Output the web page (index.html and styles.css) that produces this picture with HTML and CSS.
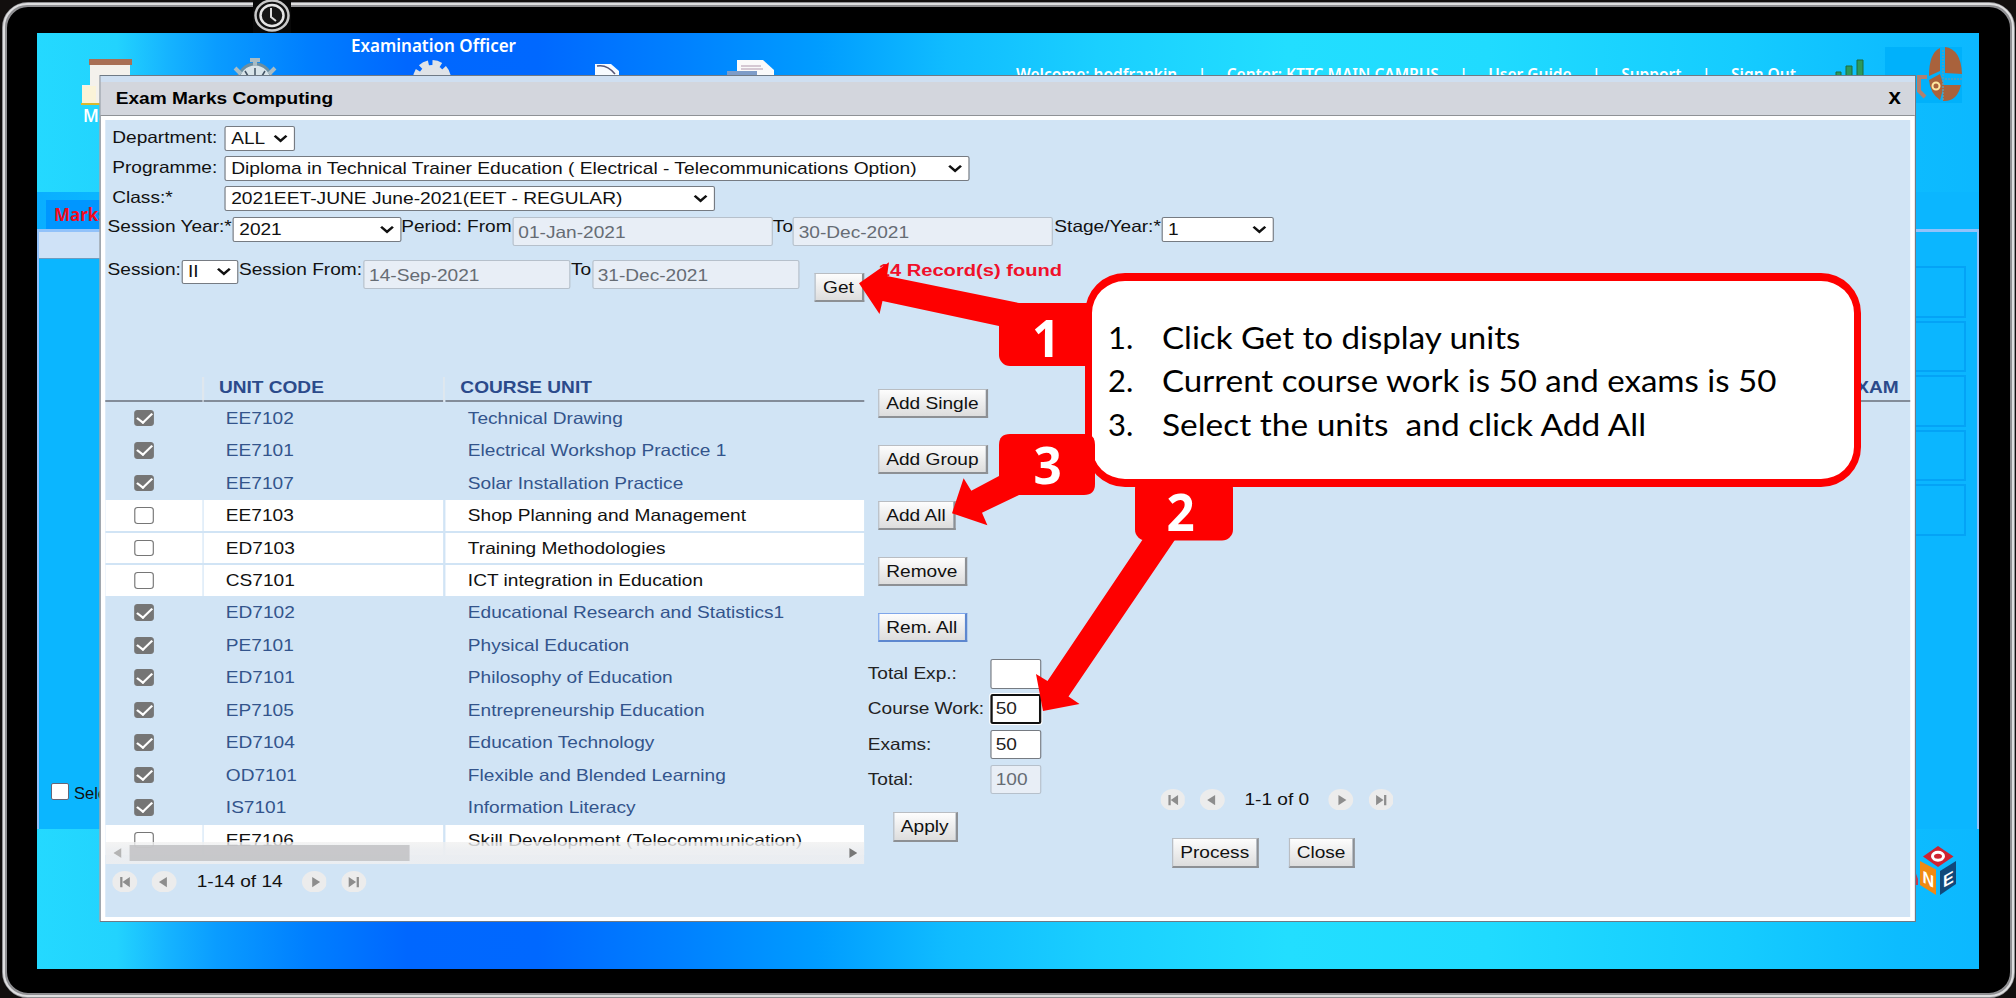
FILE: index.html
```html
<!DOCTYPE html>
<html lang="en">
<head>
<meta charset="utf-8">
<title>Exam Marks Computing</title>
<link rel="stylesheet" href="styles.css">
</head>
<body>
<div class="bezel">
  <div class="screen">
    <header class="topbar">
      <div class="role">Examination Officer</div>
      <svg class="icons" width="1942" height="90" viewBox="37 33 1942 90">
        <path d="M90 63h40v42h-48v-20h8z" fill="#f4f1ec"/><path d="M82 86h14v17h-14z" fill="#fbf3d8"/><path d="M89 59h43v6h-43z" fill="#a96f55"/><path d="M81 103h20v2h-20z" fill="#d9b92f"/>
        <circle cx="255" cy="81" r="17" fill="#d8e4ea" stroke="#6c8ea0" stroke-width="3"/><path d="M250 60h10M255 60v6M235 68l6 6M275 68l-6 6" stroke="#a9bcc4" stroke-width="4"/><path d="M255 68v7M245 71l3 5M265 71l-3 5" stroke="#456" stroke-width="1.5"/>
        <circle cx="432" cy="79" r="14" fill="#dfe3e8"/><circle cx="432" cy="79" r="15" fill="none" stroke="#dfe3e8" stroke-width="8" stroke-dasharray="8 3.780"/>
        <path d="M595 64h16l8 7v6h-24z" fill="#f7fbff"/><path d="M597 66q10-2 18 8" fill="none" stroke="#557" stroke-width="1.5"/>
        <path d="M737 60h26l11 10v6h-37z" fill="#fafafa"/><path d="M741 66h20M741 69h22" stroke="#c9b9c6" stroke-width="1.5"/><path d="M727 71h30v5h-30z" fill="#7d9cc8"/>
        <path d="M1836 72h5v5h-5zM1846 66h6v10h-6zM1857 60h6v16h-6z" fill="#2c9a5c" stroke="#1d6c3f"/>
        <path d="M1885 47h77v56h-77z" fill="#00b1fb"/>
        <path d="M1940 48q-11 5-11 28l11-5zM1945 47q16 2 17 27l-17-1zM1943 85h18q-4 17-18 16zM1929 80l11-6 4 12-4 14q-10-7-11-20z" fill="#a9623c"/>
        <circle cx="1936" cy="86" r="3.5" fill="none" stroke="#ffe8a0" stroke-width="2"/><path d="M1927 77h-8v14l6 6" fill="none" stroke="#b08070" stroke-width="4"/>
        <path d="M1943 50v50M1945 79h17" stroke="#5d9db5" stroke-width="1.5" stroke-dasharray="2 1"/>
      </svg>
      <div class="user-links">
        <span>Welcome: hodfrankin</span><i>|</i><span>Center: KTTC MAIN CAMPUS</span><i>|</i><span>User Guide</span><i>|</i><span>Support</span><i>|</i><span>Sign Out</span>
      </div>
      <div class="menu-word">Marks</div>
    </header>
    <main class="page">
      <div class="tabs"><div class="tab">Marks</div></div>
      <div class="panel">
        <div class="panel-bar"></div>
        <div class="slots"><b></b><b></b><b></b><b></b><b></b></div>
        <div class="select-all"><span class="box"></span>Select All</div>
      </div>
    </main>
    <footer class="foot">
      <svg width="56" height="50" viewBox="1904 845 56 50">
        <path d="M1911 885l4-14 3 8v6z" fill="#c33a50"/>
        <path d="M1923 856.500l15-10.500 15.500 10.500-15.500 10.500z" fill="#cf2330"/><ellipse cx="1938" cy="856.300" rx="5.500" ry="4" fill="none" stroke="#fff" stroke-width="3"/>
        <path d="M1920 861l16 8.500v25.500l-16-10z" fill="#f08a12"/><path d="M1940 871l16-10v23l-16 11z" fill="#11497b"/>
        <text transform="matrix(.95 .5 0 1 1922.500 882)" class="cube-letter">N</text>
        <text transform="matrix(.95 -.55 0 1 1943 888)" class="cube-letter">E</text>
      </svg>
    </footer>
  </div>
  <svg class="clock" width="38" height="33" viewBox="0 0 38 33">
    <path d="M0 0h38v33H0z" fill="#080808"/><ellipse cx="19" cy="15.500" rx="16.500" ry="15" fill="#111" stroke="#c9c9c9" stroke-width="2.500"/><ellipse cx="19" cy="15.500" rx="11.500" ry="10.500" fill="#161616" stroke="#e6e6e6" stroke-width="2.500"/><path d="M18 8v9l5 4" fill="none" stroke="#ddd" stroke-width="2"/>
  </svg>
</div>

<section class="modal">
  <div class="modal-head"><span>Exam Marks Computing</span><span class="x">X</span></div>
  <div class="modal-body">
    <div class="filters">
      <div class="line"><label class="lead">Department:</label><div class="select w-dept">ALL<svg viewBox="0 0 14 9"><path d="M1.500 1.500L7 7l5.500-5.500"/></svg></div></div>
      <div class="line"><label class="lead">Programme:</label><div class="select w-prog">Diploma in Technical Trainer Education ( Electrical - Telecommunications Option)<svg viewBox="0 0 14 9"><path d="M1.500 1.500L7 7l5.500-5.500"/></svg></div></div>
      <div class="line"><label class="lead">Class:*</label><div class="select w-class">2021EET-JUNE June-2021(EET - REGULAR)<svg viewBox="0 0 14 9"><path d="M1.500 1.500L7 7l5.500-5.500"/></svg></div></div>
      <div class="line year"><label class="l-year">Session Year:*</label><div class="select w-year">2021<svg viewBox="0 0 14 9"><path d="M1.500 1.500L7 7l5.500-5.500"/></svg></div><label class="l-period">Period: From</label><div class="field w-date">01-Jan-2021</div><label class="l-to">To</label><div class="field w-date">30-Dec-2021</div><label class="l-stage">Stage/Year:*</label><div class="select w-stage">1<svg viewBox="0 0 14 9"><path d="M1.500 1.500L7 7l5.500-5.500"/></svg></div></div>
      <div class="line session"><label class="l-session">Session:</label><div class="select w-session">II<svg viewBox="0 0 14 9"><path d="M1.500 1.500L7 7l5.500-5.500"/></svg></div><label class="l-from">Session From:</label><div class="field w-sdate">14-Sep-2021</div><label class="l-to2">To</label><div class="field w-sdate">31-Dec-2021</div><div class="btn get">Get</div><div class="found">14 Record(s) found</div></div>
    </div>
    <div class="work">
      <div class="units">
        <div class="thead"><span></span><span>UNIT CODE</span><span>COURSE UNIT</span></div>
        <div class="rows">
          <div class="row on"><span><i class="chk"></i></span><span>EE7102</span><span>Technical Drawing</span></div>
          <div class="row on"><span><i class="chk"></i></span><span>EE7101</span><span>Electrical Workshop Practice 1</span></div>
          <div class="row on"><span><i class="chk"></i></span><span>EE7107</span><span>Solar Installation Practice</span></div>
          <div class="row"><span><i class="chk"></i></span><span>EE7103</span><span>Shop Planning and Management</span></div>
          <div class="row"><span><i class="chk"></i></span><span>ED7103</span><span>Training Methodologies</span></div>
          <div class="row"><span><i class="chk"></i></span><span>CS7101</span><span>ICT integration in Education</span></div>
          <div class="row on"><span><i class="chk"></i></span><span>ED7102</span><span>Educational Research and Statistics1</span></div>
          <div class="row on"><span><i class="chk"></i></span><span>PE7101</span><span>Physical Education</span></div>
          <div class="row on"><span><i class="chk"></i></span><span>ED7101</span><span>Philosophy of Education</span></div>
          <div class="row on"><span><i class="chk"></i></span><span>EP7105</span><span>Entrepreneurship Education</span></div>
          <div class="row on"><span><i class="chk"></i></span><span>ED7104</span><span>Education Technology</span></div>
          <div class="row on"><span><i class="chk"></i></span><span>OD7101</span><span>Flexible and Blended Learning</span></div>
          <div class="row on"><span><i class="chk"></i></span><span>IS7101</span><span>Information Literacy</span></div>
          <div class="row"><span><i class="chk"></i></span><span>EE7106</span><span>Skill Development (Telecommunication)</span></div>
          <div class="hscroll"><svg width="7" height="10" viewBox="0 0 7 10"><path d="M7 0v10L0 5z" fill="#b4b4b4"/></svg><div class="thumb"></div><svg width="7" height="10" viewBox="0 0 7 10"><path d="M0 0v10l7-5z" fill="#777"/></svg></div>
        </div>
        <div class="pager">
          <svg viewBox="0 0 22 22"><circle cx="11" cy="11" r="11"/><path d="M15.500 6v10.500l-6.500-5.250zM7 6h2v10.500H7z"/></svg>
          <svg viewBox="0 0 22 22"><circle cx="11" cy="11" r="11"/><path d="M13.500 6v10.500L6.500 11.250z"/></svg>
          <span>1-14 of 14</span>
          <svg viewBox="0 0 22 22"><circle cx="11" cy="11" r="11"/><path d="M9 6v10.500l7-5.250z"/></svg>
          <svg viewBox="0 0 22 22"><circle cx="11" cy="11" r="11"/><path d="M6.500 6v10.500l6.500-5.250zM13.500 6h2v10.500h-2z"/></svg>
        </div>
      </div>
      <div class="actions">
        <div class="stack">
          <div class="btn">Add Single</div><div class="btn">Add Group</div><div class="btn">Add All</div><div class="btn">Remove</div><div class="btn blue">Rem. All</div>
        </div>
        <div class="totals">
          <label>Total Exp.:</label><div class="num"></div>
          <label>Course Work:</label><div class="num focus">50</div>
          <label>Exams:</label><div class="num">50</div>
          <label>Total:</label><div class="num off">100</div>
        </div>
        <div class="btn apply">Apply</div>
      </div>
      <div class="results">
        <div class="rhead">EXAM</div>
        <div class="pager">
          <svg viewBox="0 0 22 22"><circle cx="11" cy="11" r="11"/><path d="M15.500 6v10.500l-6.500-5.250zM7 6h2v10.500H7z"/></svg>
          <svg viewBox="0 0 22 22"><circle cx="11" cy="11" r="11"/><path d="M13.500 6v10.500L6.500 11.250z"/></svg>
          <span>1-1 of 0</span>
          <svg viewBox="0 0 22 22"><circle cx="11" cy="11" r="11"/><path d="M9 6v10.500l7-5.250z"/></svg>
          <svg viewBox="0 0 22 22"><circle cx="11" cy="11" r="11"/><path d="M6.500 6v10.500l6.500-5.250zM13.500 6h2v10.500h-2z"/></svg>
        </div>
        <div class="finish"><div class="btn">Process</div><div class="btn">Close</div></div>
      </div>
    </div>
  </div>
</section>

<svg class="marks" width="2016" height="998" viewBox="0 0 2016 998">
  <path d="M859 283.300L889 262.300l-2 13.700 132 27-20 23-116.500-25-3 13z"/>
  <path d="M1043 711l-7-37 11.500 7L1143 539h32.500L1068.500 696.500l11 7.500z"/>
  <rect x="999" y="303" width="100" height="63" rx="11"/>
  <rect x="1135" y="478" width="98" height="62.500" rx="11"/>
  <text transform="translate(1046 357) scale(.95 1)">1</text><text transform="translate(1180.500 530.500) scale(.95 1)">2</text>
</svg>
<ol class="callout">
  <li><span>Click Get to display units</span></li>
  <li><span>Current course work is 50 and exams is 50</span></li>
  <li><span class="wide">Select the units&nbsp; and click Add All</span></li>
</ol>
<svg class="marks" width="2016" height="998" viewBox="0 0 2016 998">
  <path d="M952 513.300l11.600-35 7.700 12.400 27.700-14.700 20 19-37 17.700 5.400 12.600z"/>
  <path d="M1010 434h75q10 0 10 11v35l0 4q0 11-11 11h-74q-11 0-11-11v-39q0-11 11-11z"/>
  <text transform="translate(1047.500 484) scale(.95 1)">3</text>
</svg>
</body>
</html>
```
FILE: styles.css
```css
* { box-sizing: border-box; }
body { margin: 0; width: 2016px; height: 998px; overflow: hidden; background: #120f0e; font-family: "Liberation Sans", Arial, sans-serif; font-size: 16.500px; color: #111; }

/* monitor frame */
.bezel { position: relative; width: 2013px; height: 996px; margin: 2px 0 0 2px; border: 5px solid #8f8f92; border-radius: 26px; background: #000; padding: 26px 29px 25px 30px; }
.bezel::before { content: ""; position: absolute; inset: -4px; border: 2px solid #dededf; border-radius: 24px; }
.clock { position: absolute; left: 246px; top: -7px; }
.screen { display: flex; flex-direction: column; width: 1942px; height: 936px; overflow: hidden;
  background: linear-gradient(90deg, #24d9ff 0, #22d3fe 80px, #16b4ff 130px, #0a9cff 180px, #007fff 270px, #0067ff 370px, #0068ff 500px, #0080ff 640px, #009cff 780px, #10bcff 910px, #1acfff 1060px, #22deff 1250px, #20dbff 1450px, #15ccff 1700px, #0dbcff 1860px, #0cb8ff 1942px); }

.topbar { position: relative; height: 159px; color: #fff; font-family: "Noto Sans", sans-serif; font-weight: 600; }
.role { padding: 2px 0 0 314px; font-size: 17px; line-height: 22px; }
.icons { position: absolute; left: 0; top: 0; }
.user-links { position: absolute; left: 979px; top: 30px; display: flex; justify-content: space-between; width: 780px; font-size: 15.5px; line-height: 22px; white-space: nowrap; }
.user-links i { font-style: normal; }
.menu-word { position: absolute; left: 46px; top: 71px; font-size: 17px; }

.page { height: 637px; background: #0bb6ff; display: flex; flex-direction: column; }
.tabs { height: 37px; padding: 8px 0 0 9px; background: linear-gradient(90deg, #0aaeff, #0bb6ff 60px); }
.tab { width: 80px; height: 29px; padding-left: 8px; background: #0096ff; color: #f10a1e; font: bold 17px/30px "Noto Sans", sans-serif; }
.panel { flex: 1; border: solid #92c2fa; border-width: 3px 2px 0; display: flex; flex-direction: column; }
.panel-bar { width: 80px; height: 27px; background: #cfe2f7; border-bottom: 1px solid #6c9cc0; }
.slots { display: flex; flex-direction: column; gap: 3px; align-items: flex-end; padding: 7px 11px 0 0; height: 523px; }
.slots b { width: 70px; height: 51.600px; border: 2px solid #04a3f6; }
.select-all { display: flex; align-items: center; gap: 5px; padding-left: 12px; white-space: nowrap; line-height: 22px; }
.box { width: 18px; height: 17px; margin-bottom: 3px; background: #fff; border: 1px solid #667; border-radius: 2px; }
.foot { display: flex; justify-content: flex-end; padding: 16px 19px 0 0; }
.cube-letter { font: bold 17px "Liberation Sans", sans-serif; fill: #fff; }

/* dialog; its contents are stretched sideways */
.modal { position: absolute; left: 99px; top: 75px; width: 1570px; height: 847px; transform: translateX(.5px) scaleX(1.157); transform-origin: 0 0; border: 1px solid #6f7a86; background: #fff; display: flex; flex-direction: column; white-space: nowrap; }
.modal-head { height: 40px; display: flex; justify-content: space-between; align-items: center; padding: 5px 12px 0 13px; background: linear-gradient(#cfdff1 0 6px, #d3d6dd 6px); border-bottom: 1px solid #8f9296; font-weight: bold; color: #000; }
.x { font: bold 16px "Noto Sans", sans-serif; }
.modal-body { flex: 1; margin: 4px; background: #d1e4f5; }
.filters { height: 257px; padding-top: 6px; }
.line { display: flex; align-items: flex-start; height: 24px; margin-bottom: 6px; line-height: 23px; }
.lead { width: 103.300px; padding-left: 6px; }
.select { display: flex; justify-content: space-between; align-items: center; height: 24.500px; padding: 0 5px 0 4.500px; background: #fff; border: 1px solid #767b82; border-radius: 2px; }
.select svg { width: 13px; height: 9px; fill: none; stroke: #111; stroke-width: 2.500; }
.w-dept { width: 60.500px; } .w-prog { width: 643.500px; font-size: 16.600px; } .w-class { width: 424px; font-size: 16.600px; }
.year { margin-top: 7px; }
.year label, .session label { line-height: 19px; }
.l-year { width: 110.300px; padding-left: 2px; } .w-year { width: 145.500px; } .l-period { width: 96.200px; }
.field { height: 29px; padding: 1px 0 0 4px; line-height: 26px; color: #666c74; background: #e8eef6; border: 1px solid #b6c0cb; border-radius: 2px; }
.w-date { width: 225px; } .l-to { width: 17.300px; } .l-stage { width: 93.800px; padding-left: 1px; } .w-stage { width: 96.500px; }
.session { margin-top: 18.500px; }
.l-session { width: 66px; padding-left: 2px; } .w-session { width: 49px; } .l-from { width: 108px; padding-left: .5px; } .w-sdate { width: 179px; } .l-to2 { width: 18.600px; padding-left: .5px; }
.btn { width: max-content; height: 29.700px; padding: 0 6.500px 0 6px; line-height: 27px; color: #111; background: linear-gradient(#fdfdfd, #ddd); border: 1px solid #b9bdc2; border-right: 2px solid #8d9094; border-bottom: 2px solid #8d9094; }
.btn.blue { border-color: #7fa6ea #5d87cf #5d87cf #7fa6ea; }
.get { margin: 13px 13px 0 13.800px; }
.found { color: #f0102a; font-weight: bold; line-height: 20px; font-size: 17.400px; }

.work { display: grid; grid-template-columns: 656px 212.600px 1fr; height: 540px; }
.thead { display: grid; grid-template-columns: 83.500px 207px 1fr; gap: 1.700px; height: 24.500px; font-weight: bold; color: #2b4a8b; }
.thead span { padding-left: 13px; line-height: 20px; border-bottom: 2px solid #838c99; box-shadow: 1.500px 0 #dfe7ee; }
.thead span:last-child { box-shadow: none; }
.rows { position: relative; height: 462.500px; overflow: hidden; padding-top: 1.200px; }
.row { display: grid; grid-template-columns: 83.500px 207px 1fr; gap: 1.700px; height: 30.770px; margin-bottom: 1.700px; line-height: 30px; color: #111; }
.row span { padding-left: 19px; background: #fff; }
.row span:last-child { padding-left: 19.500px; }
.row.on { color: #33548c; }
.row.on span { background: none; }
.row span:first-child { padding: 7px 0 0 25px; line-height: 0; }
.chk { display: inline-block; position: relative; width: 17px; height: 16.700px; border: 1.500px solid #767676; border-radius: 3px; background: #fff; }
.on .chk { background: #757575; }
.on .chk::after { content: ""; position: absolute; left: 4.300px; top: -.7px; width: 6px; height: 11px; border: solid #fff; border-width: 0 2.400px 2.400px 0; transform: rotate(42deg); }
.hscroll { position: absolute; left: 0; right: 0; bottom: 0; height: 22px; display: flex; align-items: center; justify-content: space-between; padding: 0 6px 0 7px; background: linear-gradient(rgba(240,240,240,.75), rgba(236,238,241,.95) 40%); }
.thumb { width: 242px; height: 16px; margin: 0 auto 0 7px; background: rgba(190,190,192,.8); }
.pager { display: flex; align-items: center; }
.pager svg { width: 21.600px; height: 21.600px; margin-right: 12.900px; }
.pager circle { fill: #ececec; } .pager path { fill: #8d8d8d; }
.pager span { margin: 0 16.500px 0 4px; }
.units .pager { padding: 6.500px 0 0 6px; }

.actions { padding: 11.700px 0 0 3px; }
.stack { display: flex; flex-direction: column; gap: 26.300px; padding-left: 9px; }
.totals { display: grid; grid-template-columns: 105.600px 44.500px; gap: 5.500px 0; margin-top: 17px; color: #222; line-height: 29px; }
.num { height: 29.600px; padding-left: 4px; line-height: 27px; background: #fff; border: 1px solid #767b82; border-radius: 2px; }
.num.focus { border: 2px solid #111; padding-left: 3px; line-height: 25px; box-shadow: 0 0 0 1px #fff; }
.num.off { background: #e8eef6; border-color: #b6c0cb; color: #666c74; }
.apply { margin: 18px 0 0 21.600px; }
.rhead { height: 24.500px; padding-right: 10px; text-align: right; font-weight: bold; color: #2b4a8b; line-height: 20px; border-bottom: 2px solid #838c99; }
.results .pager { padding: 387.200px 0 0 43px; }
.finish { display: flex; gap: 25.500px; padding: 28px 0 0 53.500px; }

/* instructions drawn over the dialog */
.marks { position: absolute; left: 0; top: 0; fill: #fe0000; }
.marks text { fill: #fff; font: bold 52px "Open Sans", sans-serif; text-anchor: middle; }
.callout { position: absolute; left: 1085px; top: 273px; width: 776px; height: 214px; margin: 0; padding: 35px 0 0 70px; border: solid #fe0000; border-width: 8px 7px; border-radius: 40px; background: #fff; color: #000; font: 31px/43.300px Lato, sans-serif; list-style: none; counter-reset: n; white-space: nowrap; }
.callout li { counter-increment: n; position: relative; height: 43.300px; }
.callout li::before { content: counter(n) "."; position: absolute; left: -54px; }
.callout span { display: inline-block; transform-origin: 0 0; transform: scaleX(1.067); }
.callout span.wide { transform: scaleX(1.079); }
```
